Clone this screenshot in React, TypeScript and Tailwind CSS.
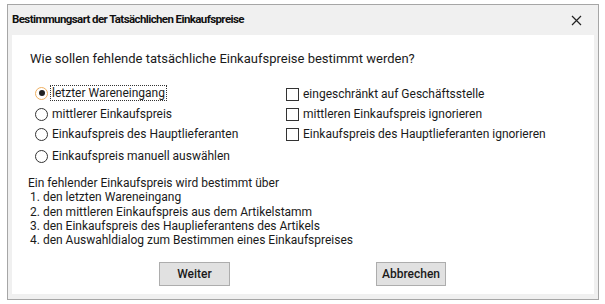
import React from "react";

const font = { fontFamily: "Roboto, 'Liberation Sans', sans-serif" };

function Radio({ checked, label, focus, cls }: { checked?: boolean; label: string; focus?: boolean; cls?: string }) {
  return (
    <div className={"flex items-center h-[20px] " + (cls || "")}>
      <div
        className={
          "w-[13px] h-[13px] rounded-full border flex items-center justify-center bg-white " +
          (checked ? "border-[#f0b060]" : "border-[#333333]")
        }
      >
        {checked && <div className="w-[6px] h-[6px] rounded-full bg-[#222222]" />}
      </div>
      <span
        className={
          "ml-[3px] leading-[14px] px-[1px] " +
          (focus ? "outline outline-1 outline-dotted outline-[#333333]" : "")
        }
      >
        {label}
      </span>
    </div>
  );
}

function Check({ label }: { label: string }) {
  return (
    <div className="flex items-center h-[20px]">
      <div className="w-[13px] h-[13px] border border-[#333333] bg-white" />
      <span className="ml-[4px]">{label}</span>
    </div>
  );
}

export default function App() {
  return (
    <div className="w-[605px] h-[304px] bg-white pt-[4px] pl-[7px]" style={font}>
      <div className="w-[592px] h-[296px] border border-[#a6a6a6] bg-[#f0f0f0] flex flex-col">
        <div className="h-[30px] flex items-center justify-between pl-[4px] pr-[16px]">
          <span className="text-[11.5px] font-bold text-[#111111] tracking-[-0.6px]">Bestimmungsart der Tatsächlichen Einkaufspreise</span>
          <svg width="11" height="11" viewBox="0 0 11 11">
            <path d="M1 1 L10 10 M10 1 L1 10" stroke="#222222" strokeWidth="1.2" />
          </svg>
        </div>
        <div className="flex-1 mx-[4px] mb-[5px] bg-white text-[12px] text-[#1a1a1a] flex flex-col">
          <div className="pl-[18px] pt-[16px] leading-[16px] text-[13px]">Wie sollen fehlende tatsächliche Einkaufspreise bestimmt werden?</div>
          <div className="flex pt-[16px]">
            <div className="pl-[23px] w-[274px] flex flex-col">
              <Radio checked focus label="letzter Wareneingang" />
              <Radio cls="mt-[1px]" label="mittlerer Einkaufspreis" />
              <Radio label="Einkaufspreis des Hauptlieferanten" />
              <Radio cls="mt-[2px]" label="Einkaufspreis manuell auswählen" />
            </div>
            <div className="flex flex-col pt-[1px]">
              <Check label="eingeschränkt auf Geschäftsstelle" />
              <Check label="mittleren Einkaufspreis ignorieren" />
              <Check label="Einkaufspreis des Hauptlieferanten ignorieren" />
            </div>
          </div>
          <div className="pl-[16px] pt-[10px] leading-[14.3px]">
            <div>Ein fehlender Einkaufspreis wird bestimmt über</div>
            <div className="pl-[2px]">1. den letzten Wareneingang</div>
            <div className="pl-[2px]">2. den mittleren Einkaufspreis aus dem Artikelstamm</div>
            <div className="pl-[2px]">3. den Einkaufspreis des Hauplieferantens des Artikels</div>
            <div className="pl-[2px]">4. den Auswahldialog zum Bestimmen eines Einkaufspreises</div>
          </div>
          <div className="flex pt-[15px]">
            <button className="ml-[147px] w-[71px] h-[24px] bg-[#e1e1e1] border border-[#adadad] font-medium text-[12px]">Weiter</button>
            <button className="ml-[146px] w-[70px] h-[24px] bg-[#e1e1e1] border border-[#adadad] font-medium text-[12px]">Abbrechen</button>
          </div>
        </div>
      </div>
    </div>
  );
}
